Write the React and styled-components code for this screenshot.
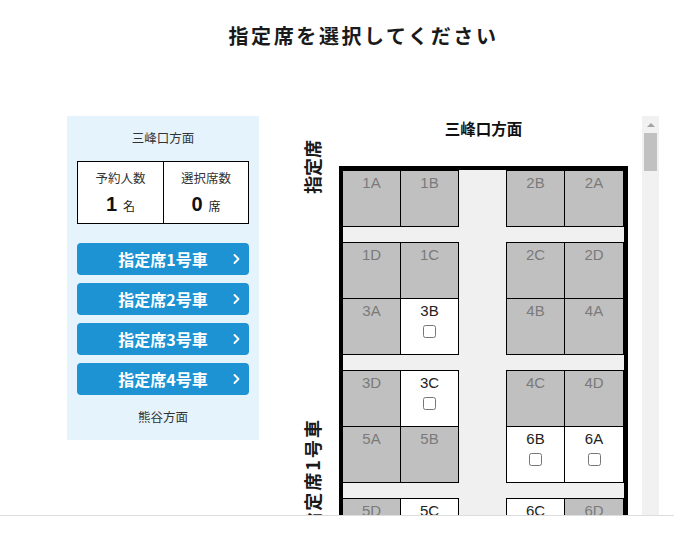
import React from "react";
import styled, { createGlobalStyle } from "styled-components";

const GlobalStyle = createGlobalStyle`
  html, body {
    margin: 0;
    padding: 0;
    background: #fff;
  }
  body {
    font-family: "Noto Sans CJK JP", "Liberation Sans", sans-serif;
    color: #222;
  }
`;

const Page = styled.div`
  padding: 22px 14px 0 67px;
`;

const PageTitle = styled.h1`
  margin: 0;
  text-align: center;
  font-size: 20px;
  line-height: 28px;
  font-weight: 700;
  letter-spacing: 2.6px;
  color: #1a1a1a;
`;

const Main = styled.div`
  display: flex;
  gap: 20px;
  margin-top: 66px;
`;

const Side = styled.aside`
  width: 192px;
  flex: none;
  align-self: flex-start;
  box-sizing: border-box;
  background: #e5f4fc;
  padding: 13px 10px 14px;
`;

const DirLabel = styled.div`
  font-size: 12.5px;
  line-height: 18px;
  text-align: center;
  color: #333;
`;

const CountBox = styled.div`
  display: grid;
  grid-template-columns: 1fr 1fr;
  margin: 14px 0 19px;
  border: 1px solid #000;
  background: #fff;
`;

const CountCell = styled.div`
  padding: 7px 0 4px;
  text-align: center;
  & + & {
    border-left: 1px solid #000;
  }
`;

const CountLabel = styled.div`
  font-size: 12.5px;
  line-height: 18px;
  color: #333;
`;

const CountValue = styled.div`
  display: flex;
  justify-content: center;
  align-items: baseline;
  gap: 6px;
  margin-top: 4px;
  line-height: 26px;
`;

const Num = styled.span`
  font: 700 20px/26px "Liberation Sans", "Noto Sans CJK JP", sans-serif;
  color: #111;
`;

const Unit = styled.span`
  font-size: 12px;
  color: #222;
`;

const CarButtons = styled.div`
  display: flex;
  flex-direction: column;
  gap: 8px;
  margin-bottom: 13px;
`;

const CarButton = styled.button`
  display: grid;
  grid-template-columns: 1fr auto 1fr;
  align-items: center;
  width: 100%;
  height: 32px;
  padding: 0 9px;
  border: 0;
  border-radius: 4px;
  background: #1e93d3;
  color: #fff;
  font-family: "Noto Sans CJK JP", "Liberation Sans", sans-serif;
  font-size: 16px;
  font-weight: 700;
  cursor: pointer;
  span {
    grid-column: 2;
  }
  svg {
    grid-column: 3;
    justify-self: end;
  }
`;

const ScrollArea = styled.div`
  display: flex;
  flex: none;
  width: 380px;
  height: 422px;
`;

const Viewport = styled.div`
  flex: 1;
  min-width: 0;
  overflow-y: auto;
  scrollbar-width: none;
  &::-webkit-scrollbar {
    display: none;
  }
`;

const ScrollTrack = styled.div`
  width: 17px;
  flex: none;
  display: flex;
  flex-direction: column;
  align-items: center;
  background: #f1f1f1;
`;

const ScrollArrow = styled.div`
  height: 17px;
  flex: none;
  display: flex;
  align-items: center;
  justify-content: center;
`;

const ScrollThumb = styled.div`
  width: 13px;
  height: 38px;
  background: #c1c1c1;
`;

const Car = styled.div`
  display: flex;
`;

const LabelCol = styled.div`
  width: 60px;
  flex: none;
  box-sizing: border-box;
  padding-left: 24px;
  display: flex;
  flex-direction: column;
  align-items: flex-start;
`;

const SideLabel = styled.div`
  writing-mode: vertical-rl;
  text-orientation: sideways;
  transform: rotate(180deg);
  margin-top: ${(p) => p.$top}px;
  font-size: 18px;
  line-height: 19px;
  font-weight: 700;
  letter-spacing: ${(p) => (p.$spaced ? "2px" : "0")};
  color: #1a1a1a;
`;

const MapCol = styled.div`
  width: 289px;
  flex: none;
`;

const MapHeading = styled.div`
  text-align: center;
  font-size: 15.5px;
  line-height: 20px;
  font-weight: 700;
  color: #111;
  padding-top: ${(p) => (p.$bottom ? "20px" : "2px")};
  margin-bottom: ${(p) => (p.$bottom ? "40px" : "28px")};
`;

const Frame = styled.div`
  border: 4px solid #000;
  background: #f0f0f0;
  display: flex;
  flex-direction: column;
  gap: 15px;
`;

const Group = styled.div`
  display: flex;
`;

const Block = styled.div`
  display: grid;
  grid-template-columns: ${(p) => (p.$right ? "57px 58px" : "57px 57px")};
  gap: 1px;
  padding: 1px;
  background: #000;
  margin-left: ${(p) => (p.$right ? "0" : "-1px")};
`;

const Aisle = styled.div`
  width: 47px;
  flex: none;
`;

const Seat = styled.div`
  height: 55px;
  box-sizing: border-box;
  padding-top: 3px;
  display: flex;
  flex-direction: column;
  align-items: center;
  background: ${(p) => (p.$free ? "#fff" : "#c0c0c0")};
  color: ${(p) => (p.$free ? "#222" : "#7a7a7a")};
  font: 15px/17px "Liberation Sans", Arial, sans-serif;
  input {
    margin: 6px 0 0;
    width: 13px;
    height: 13px;
  }
`;

const Footer = styled.div`
  position: fixed;
  left: 0;
  right: 0;
  bottom: 0;
  height: 22px;
  background: #fff;
  border-top: 1px solid #ddd;
`;

const Chevron = () => (
  <svg width="7" height="10" viewBox="0 0 7 10">
    <polyline
      points="1.5,1 5.5,5 1.5,9"
      fill="none"
      stroke="#fff"
      strokeWidth="1.8"
      strokeLinecap="round"
      strokeLinejoin="round"
    />
  </svg>
);

const UpTriangle = () => (
  <svg width="8" height="4" viewBox="0 0 8 4">
    <polygon points="0,4 4,0 8,4" fill="#a3a3a3" />
  </svg>
);

const carOneFree = new Set([
  "3B", "3C", "6B", "6A", "5C", "6C", "7B", "8A", "9D", "10C", "11A",
  "11B", "12B", "13C", "14D", "15B", "16A",
]);

const rowSeats = (r) => {
  const n = Math.floor(r / 2) * 2 + 1;
  return r % 2 === 0
    ? [`${n}A`, `${n}B`, `${n + 1}B`, `${n + 1}A`]
    : [`${n}D`, `${n}C`, `${n + 1}C`, `${n + 1}D`];
};

const groups = [[0]];
for (let r = 1; r < 15; r += 2) groups.push([r, r + 1]);

const isFree = (car, id, idx) =>
  car === 1 ? carOneFree.has(id) : (idx * 7 + car * 3) % 5 === 0;

const SeatCell = ({ id, free }) => (
  <Seat $free={free}>
    {id}
    {free && <input type="checkbox" aria-label={id} />}
  </Seat>
);

const CarMap = ({ car }) => {
  let idx = 0;
  return (
    <Car>
      <LabelCol>
        <SideLabel $top={24}>指定席</SideLabel>
        <SideLabel $top={224} $spaced>
          指定席{car}号車
        </SideLabel>
      </LabelCol>
      <MapCol>
        <MapHeading>三峰口方面</MapHeading>
        <Frame>
          {groups.map((rows) => {
            const seats = rows.map((r) =>
              rowSeats(r).map((id) => ({ id, free: isFree(car, id, idx++) }))
            );
            return (
              <Group key={rows[0]}>
                <Block>
                  {seats.map((s) => [s[0], s[1]]).flat().map((s) => (
                    <SeatCell key={s.id} id={s.id} free={s.free} />
                  ))}
                </Block>
                <Aisle />
                <Block $right>
                  {seats.map((s) => [s[2], s[3]]).flat().map((s) => (
                    <SeatCell key={s.id} id={s.id} free={s.free} />
                  ))}
                </Block>
              </Group>
            );
          })}
        </Frame>
        <MapHeading $bottom>熊谷方面</MapHeading>
      </MapCol>
    </Car>
  );
};

export default function App() {
  return (
    <>
      <GlobalStyle />
      <Page>
        <PageTitle>指定席を選択してください</PageTitle>
        <Main>
          <Side>
            <DirLabel>三峰口方面</DirLabel>
            <CountBox>
              <CountCell>
                <CountLabel>予約人数</CountLabel>
                <CountValue>
                  <Num>1</Num>
                  <Unit>名</Unit>
                </CountValue>
              </CountCell>
              <CountCell>
                <CountLabel>選択席数</CountLabel>
                <CountValue>
                  <Num>0</Num>
                  <Unit>席</Unit>
                </CountValue>
              </CountCell>
            </CountBox>
            <CarButtons>
              {[1, 2, 3, 4].map((n) => (
                <CarButton key={n}>
                  <span>指定席{n}号車</span>
                  <Chevron />
                </CarButton>
              ))}
            </CarButtons>
            <DirLabel>熊谷方面</DirLabel>
          </Side>
          <ScrollArea>
            <Viewport>
              {[1, 2, 3, 4].map((n) => (
                <CarMap key={n} car={n} />
              ))}
            </Viewport>
            <ScrollTrack>
              <ScrollArrow>
                <UpTriangle />
              </ScrollArrow>
              <ScrollThumb />
            </ScrollTrack>
          </ScrollArea>
        </Main>
      </Page>
      <Footer />
    </>
  );
}
